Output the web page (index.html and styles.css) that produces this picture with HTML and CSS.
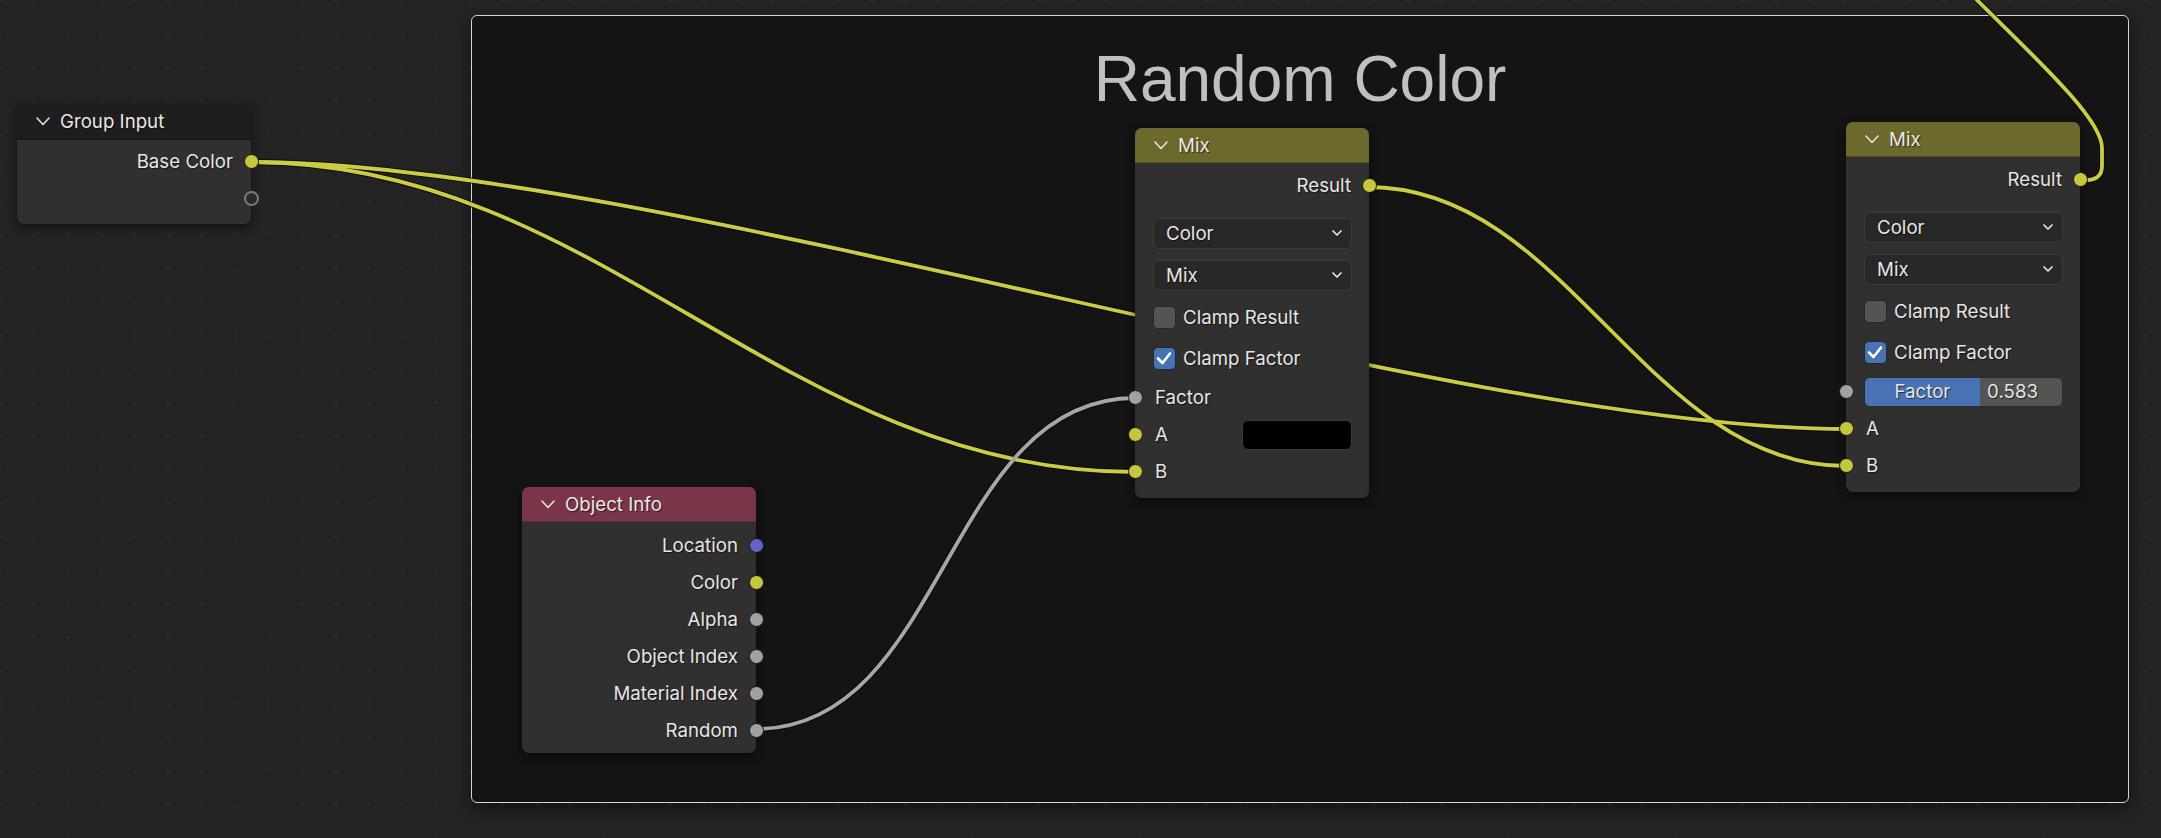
FILE: index.html
```html
<!DOCTYPE html>
<html>
<head>
<meta charset="utf-8">
<link rel="stylesheet" href="styles.css">
</head>
<body>
<div class="canvas">
  <div class="frame"><div class="frame-title">Random Color</div></div>

  <svg class="links" width="2161" height="838" viewBox="0 0 2161 838">
    <g class="outline">
      <path d="M251,162 C651,162 1446,429 1846,429"/>
      <path d="M251,162 C601,162 785,472 1135,472"/>
      <path d="M1368,187 C1568,187 1646,466 1846,466"/>
      <path d="M756,729 C946,729 945,398 1135,398"/>
      <path d="M1975,-2 C2032,55 2102,118 2102,148 L2102,166 Q2102,179 2088,180 L2080,180"/>
    </g>
    <g class="yellow-link">
      <path d="M251,162 C651,162 1446,429 1846,429"/>
      <path d="M251,162 C601,162 785,472 1135,472"/>
      <path d="M1368,187 C1568,187 1646,466 1846,466"/>
      <path d="M1975,-2 C2032,55 2102,118 2102,148 L2102,166 Q2102,179 2088,180 L2080,180"/>
    </g>
    <g class="gray-link">
      <path d="M756,729 C946,729 945,398 1135,398"/>
    </g>
  </svg>

  <!-- Group Input -->
  <div class="node n-group">
    <div class="node-head head-dark">
      <svg class="chev" width="14" height="9" viewBox="0 0 14 9"><polyline points="1,1 7,7.5 13,1"/></svg>
      <span>Group Input</span>
    </div>
    <div class="node-body">
      <div class="row out">Base Color<i class="sock yellow"></i></div>
      <div class="row out"><i class="sock empty"></i></div>
    </div>
  </div>

  <!-- Mix 1 -->
  <div class="node n-mix1">
    <div class="node-head head-olive">
      <svg class="chev" width="14" height="9" viewBox="0 0 14 9"><polyline points="1,1 7,7.5 13,1"/></svg>
      <span>Mix</span>
    </div>
    <div class="node-body">
      <div class="row out">Result<i class="sock yellow"></i></div>
      <div class="select first"><span>Color</span><svg class="dd" width="10" height="7" viewBox="0 0 10 7"><polyline points="1,1 5,5 9,1"/></svg></div>
      <div class="select"><span>Mix</span><svg class="dd" width="10" height="7" viewBox="0 0 10 7"><polyline points="1,1 5,5 9,1"/></svg></div>
      <div class="check first"><span class="box"></span>Clamp Result</div>
      <div class="check"><span class="box on"><svg width="22" height="22" viewBox="0 0 22 22"><polyline points="5,11.5 9.5,16 17,6.5"/></svg></span>Clamp Factor</div>
      <div class="row in"><i class="sock gray"></i>Factor</div>
      <div class="row in"><i class="sock yellow"></i>A<span class="swatch"></span></div>
      <div class="row in"><i class="sock yellow"></i>B</div>
    </div>
  </div>

  <!-- Mix 2 -->
  <div class="node n-mix2">
    <div class="node-head head-olive">
      <svg class="chev" width="14" height="9" viewBox="0 0 14 9"><polyline points="1,1 7,7.5 13,1"/></svg>
      <span>Mix</span>
    </div>
    <div class="node-body">
      <div class="row out">Result<i class="sock yellow"></i></div>
      <div class="select first"><span>Color</span><svg class="dd" width="10" height="7" viewBox="0 0 10 7"><polyline points="1,1 5,5 9,1"/></svg></div>
      <div class="select"><span>Mix</span><svg class="dd" width="10" height="7" viewBox="0 0 10 7"><polyline points="1,1 5,5 9,1"/></svg></div>
      <div class="check first"><span class="box"></span>Clamp Result</div>
      <div class="check"><span class="box on"><svg width="22" height="22" viewBox="0 0 22 22"><polyline points="5,11.5 9.5,16 17,6.5"/></svg></span>Clamp Factor</div>
      <div class="row slider-row"><i class="sock gray"></i>
        <div class="slider"><div class="fill" style="width:58.3%"><span>Factor</span></div><span class="val">0.583</span></div>
      </div>
      <div class="row in"><i class="sock yellow"></i>A</div>
      <div class="row in"><i class="sock yellow"></i>B</div>
    </div>
  </div>

  <!-- Object Info -->
  <div class="node n-obj">
    <div class="node-head head-red">
      <svg class="chev" width="14" height="9" viewBox="0 0 14 9"><polyline points="1,1 7,7.5 13,1"/></svg>
      <span>Object Info</span>
    </div>
    <div class="node-body obj-body">
      <div class="row out">Location<i class="sock blue"></i></div>
      <div class="row out">Color<i class="sock yellow"></i></div>
      <div class="row out">Alpha<i class="sock gray"></i></div>
      <div class="row out">Object Index<i class="sock gray"></i></div>
      <div class="row out">Material Index<i class="sock gray"></i></div>
      <div class="row out">Random<i class="sock gray"></i></div>
    </div>
  </div>
</div>
</body>
</html>
```

FILE: styles.css
```css
* { box-sizing: border-box; }
html, body { margin: 0; padding: 0; background: #232323; }
body { font-family: Inter, "Noto Sans", sans-serif; }

.canvas {
  position: relative;
  width: 2161px;
  height: 838px;
  overflow: hidden;
  background-color: #232323;
  background-image: radial-gradient(circle at center, #2b2b2b 0, #2b2b2b 1.2px, transparent 1.8px);
  background-size: 33.5px 33.5px;
  background-position: -16px -16px;
}

/* Frame */
.frame {
  position: absolute;
  left: 471px;
  top: 15px;
  width: 1658px;
  height: 788px;
  background: #141414;
  border: 1.5px solid #d4d4d4;
  border-radius: 6px;
  box-shadow: 0 6px 14px rgba(0,0,0,0.45);
  display: flex;
  justify-content: center;
}
.frame-title {
  font-family: "Liberation Sans", Arial, sans-serif;
  font-size: 64px;
  line-height: 64px;
  color: #c0c0c0;
  padding-top: 31px;
  letter-spacing: 0;
}

/* Links */
.links { position: absolute; left: 0; top: 0; }
.links path { fill: none; stroke-linecap: round; }
.outline path { stroke: rgba(10,10,10,0.85); stroke-width: 6; }
.yellow-link path { stroke: #cbcb45; stroke-width: 3.8; }
.gray-link path { stroke: #a6a6a6; stroke-width: 3.8; }

/* Nodes */
.node {
  position: absolute;
  width: 234px;
  background: #303030;
  border-radius: 7px;
  box-shadow: 0 3px 8px rgba(0,0,0,0.55);
  color: #e6e6e6;
  font-size: 18.7px;
  text-shadow: 1px 1px 1px rgba(0,0,0,0.6);
}
.n-group { left: 17px; top: 103px; }
.n-mix1 { left: 1135px; top: 128px; }
.n-mix2 { left: 1846px; top: 122px; }
.n-obj { left: 522px; top: 487px; }

.node-head {
  height: 35px;
  border-radius: 7px 7px 0 0;
  display: flex;
  align-items: center;
  padding-left: 19px;
  gap: 10px;
  font-size: 18.7px;
  color: #e8e8e8;
  border-bottom: 1px solid rgba(0,0,0,0.25);
}
.head-dark { background: #1e1e1e; height: 37px; }
.head-olive { background: #6b6a2c; }
.head-red { background: #7b3549; }
.chev { flex: none; }
.chev polyline { fill: none; stroke: #e2e2e2; stroke-width: 1.6; stroke-linecap: round; stroke-linejoin: round; }

.node-body { padding: 4px 0 8px; display: flex; flex-direction: column; }
.n-group .node-body { padding: 3px 0 7px; }
.obj-body { padding: 5px 0 4px; }

.row {
  position: relative;
  height: 37px;
  display: flex;
  align-items: center;
}
.row.out { justify-content: flex-end; padding-right: 18px; }
.row.in { padding-left: 20px; padding-right: 17px; }

.sock {
  position: absolute;
  top: 50%;
  width: 15px;
  height: 15px;
  margin-top: -7.5px;
  border-radius: 50%;
  border: 1px solid #161616;
}
.out .sock { right: -7.5px; }
.in .sock, .slider-row .sock { left: -7.5px; }
.sock.yellow { background: #c7c73f; }
.sock.gray { background: #a1a1a1; }
.sock.blue { background: #6363c7; }
.sock.empty { background: #2a2a2a; border: 2px solid #7c7c7c; }

/* Dropdowns */
.select {
  margin: 11px 17px 0 18px;
  height: 31px;
  background: #282828;
  border: 1px solid #3b3b3b;
  border-radius: 6px;
  display: flex;
  align-items: center;
  justify-content: space-between;
  padding: 0 9px 0 12px;
}
.select.first { margin-top: 14px; }
.dd polyline { fill: none; stroke: #e6e6e6; stroke-width: 1.7; stroke-linecap: round; stroke-linejoin: round; }

/* Checkboxes */
.check {
  height: 41px;
  display: flex;
  align-items: center;
  padding-left: 18px;
  gap: 7px;
}
.check.first { margin-top: 6px; }
.box {
  width: 23px;
  height: 23px;
  border-radius: 5px;
  background: #545454;
  border: 1px solid #262626;
  display: flex;
}
.box.on { background: #4772b3; }
.box svg { margin: -1px; }
.box polyline { fill: none; stroke: #fff; stroke-width: 2.6; stroke-linecap: round; stroke-linejoin: round; }

.swatch {
  margin-left: auto;
  width: 110px;
  height: 30px;
  background: #000;
  border: 1px solid #3a3a3a;
  border-radius: 6px;
}

/* Slider */
.slider-row { padding: 0 17px 0 18px; }
.slider {
  flex: 1;
  height: 30px;
  background: #545454;
  border: 1px solid #2a2a2a;
  border-radius: 6px;
  overflow: hidden;
  display: flex;
  align-items: center;
  position: relative;
}
.fill {
  height: 100%;
  background: #4772b3;
  display: flex;
  align-items: center;
  justify-content: center;
}
.val { position: absolute; right: 24px; }
```
